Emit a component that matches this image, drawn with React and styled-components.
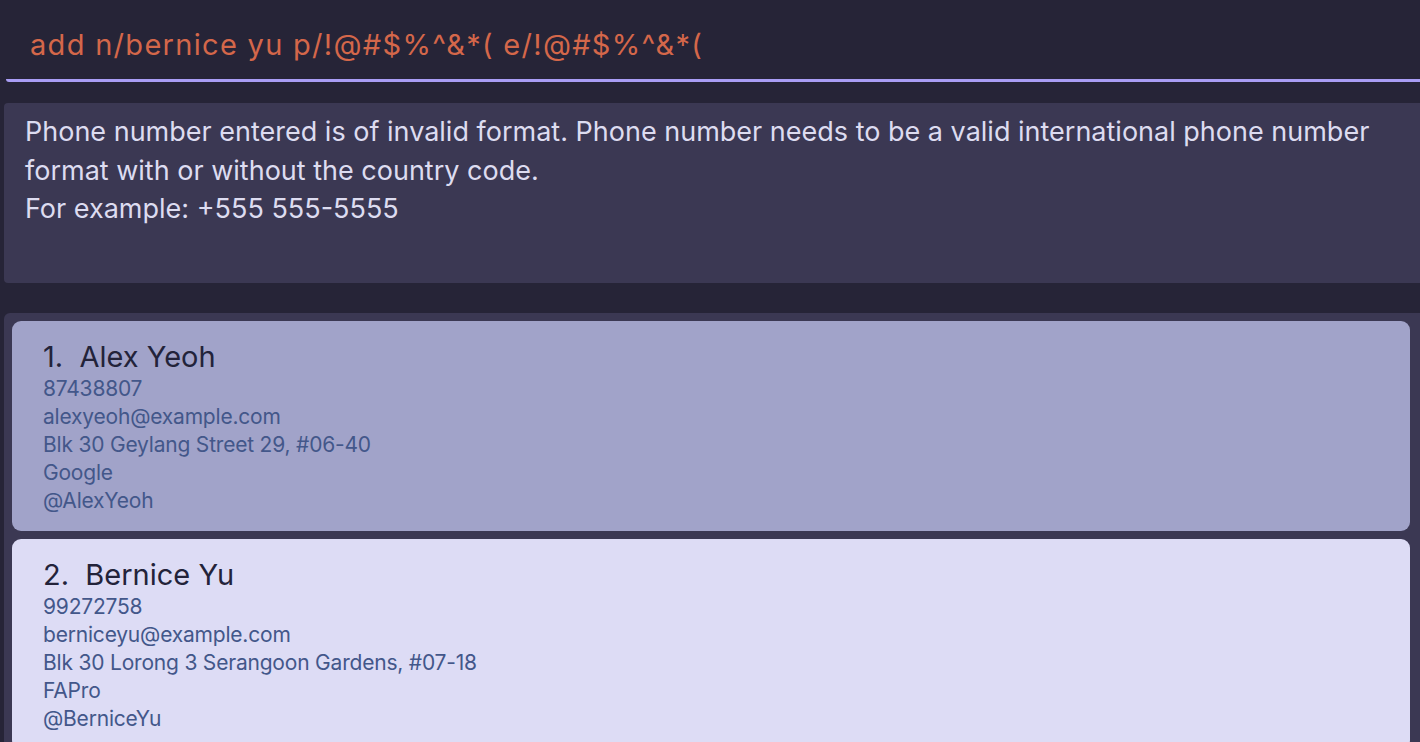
import React from "react";
import styled, { createGlobalStyle } from "styled-components";

const GlobalStyle = createGlobalStyle`
  html, body {
    margin: 0;
    padding: 0;
    background: #262437;
    overflow: hidden;
  }
  * {
    box-sizing: border-box;
  }
`;

const persons = [
  {
    name: "Alex Yeoh",
    phone: "87438807",
    email: "alexyeoh@example.com",
    address: "Blk 30 Geylang Street 29, #06-40",
    company: "Google",
    handle: "@AlexYeoh",
  },
  {
    name: "Bernice Yu",
    phone: "99272758",
    email: "berniceyu@example.com",
    address: "Blk 30 Lorong 3 Serangoon Gardens, #07-18",
    company: "FAPro",
    handle: "@BerniceYu",
  },
];

const App = () => {
  return (
    <>
      <GlobalStyle />
      <Window>
        <CommandBox>
          <CommandText>add n/bernice yu p/!@#$%^&*( e/!@#$%^&*(</CommandText>
        </CommandBox>
        <ResultBox>
          Phone number entered is of invalid format. Phone number needs to be a
          valid international phone number format with or without the country
          code.
          <br />
          For example: +555 555-5555
        </ResultBox>
        <ListPanel>
          {persons.map((p, i) => (
            <Card key={p.name} selected={i === 0}>
              <Name>
                {i + 1}.&nbsp;&nbsp;{p.name}
              </Name>
              <Detail>{p.phone}</Detail>
              <Detail>{p.email}</Detail>
              <Detail>{p.address}</Detail>
              <Detail>{p.company}</Detail>
              <Detail>{p.handle}</Detail>
            </Card>
          ))}
        </ListPanel>
      </Window>
    </>
  );
};

const Window = styled.div`
  width: 1420px;
  height: 742px;
  display: flex;
  flex-direction: column;
  font-family: Inter, "Open Sans", sans-serif;
  overflow: hidden;
`;

const CommandBox = styled.div`
  flex-shrink: 0;
  height: 82px;
  margin-left: 6px;
  padding: 25px 0 0 24px;
  border-bottom: 3px solid #a99df5;
  border-bottom-left-radius: 3px;
`;

const CommandText = styled.div`
  font-size: 29px;
  line-height: 40px;
  color: #d4674a;
  letter-spacing: 1.3px;
  white-space: pre;
`;

const ResultBox = styled.div`
  flex-shrink: 0;
  margin: 21px 0 0 4px;
  height: 180px;
  padding: 10px 21px;
  background: #3b3853;
  border-radius: 4px 0 0 4px;
  color: #dddcf0;
  font-size: 27px;
  line-height: 38.5px;
  letter-spacing: 0;
`;

const ListPanel = styled.div`
  flex: 1;
  min-height: 0;
  margin: 30px 0 0 4px;
  padding: 8px 10px 0 8px;
  background: #3b3853;
  border-top-left-radius: 6px;
  display: flex;
  flex-direction: column;
  gap: 8px;
  overflow: hidden;
`;

const Card = styled.div`
  flex-shrink: 0;
  height: 210px;
  padding: 18px 31px;
  border-radius: 9px;
  background: ${(p) => (p.selected ? "#a1a3c9" : "#dddcf5")};
`;

const Name = styled.div`
  font-size: 29px;
  line-height: 36px;
  color: #23233a;
  letter-spacing: 0;
`;

const Detail = styled.div`
  font-size: 21px;
  line-height: 28px;
  color: #43578a;
  letter-spacing: -0.2px;
`;

export default App;
